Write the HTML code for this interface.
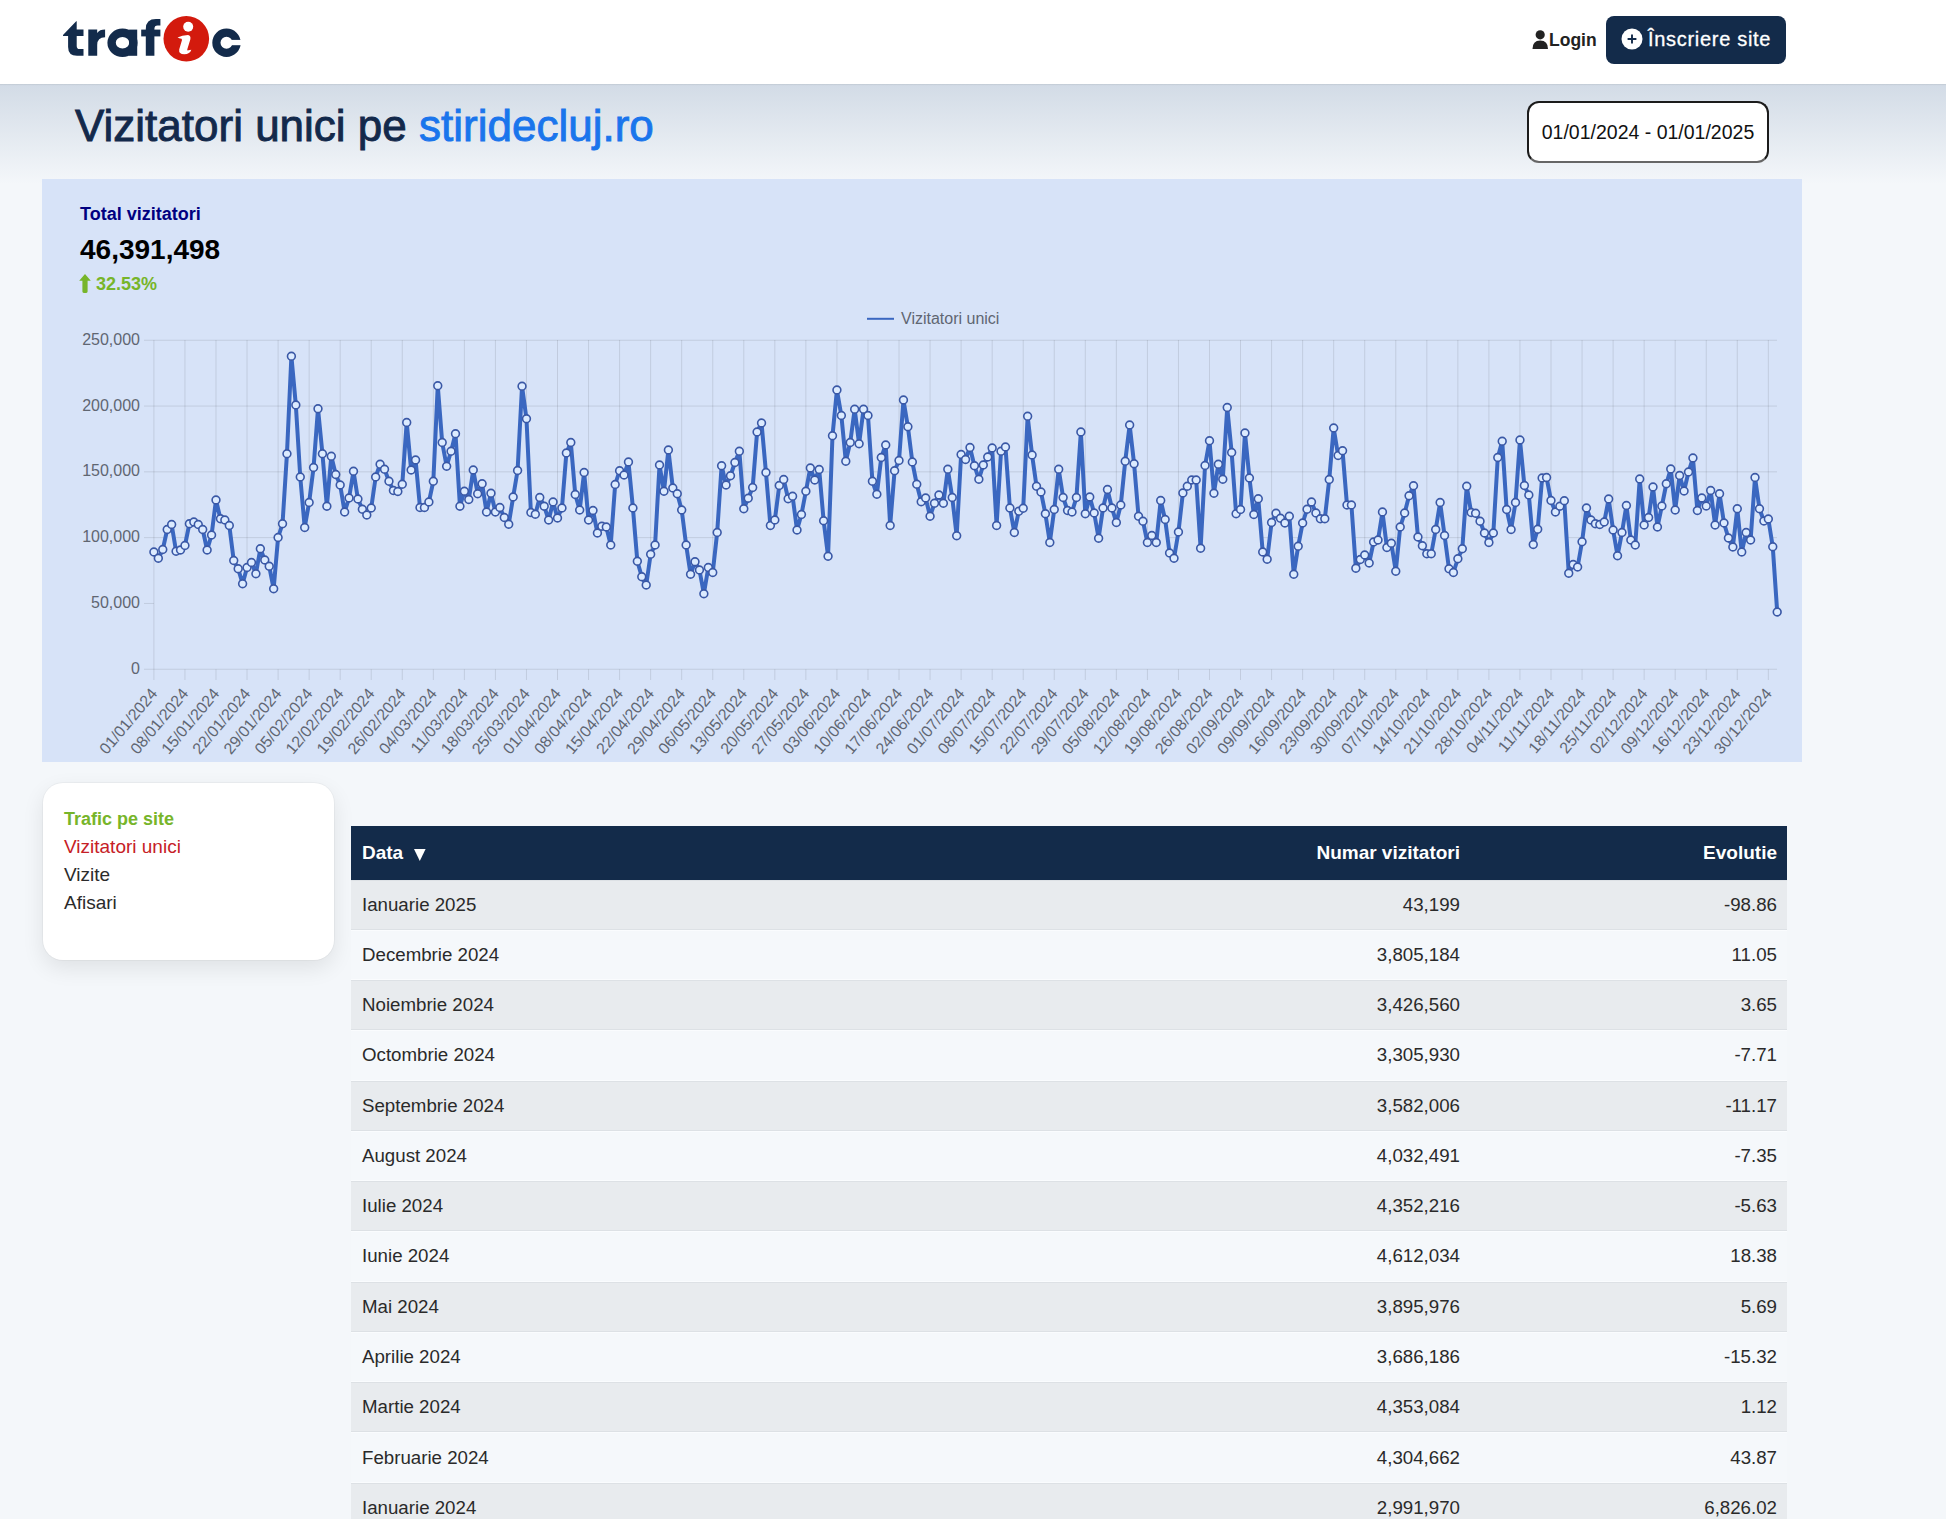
<!DOCTYPE html>
<html><head><meta charset="utf-8">
<style>
*{box-sizing:border-box;margin:0;padding:0}
html,body{width:1946px;height:1519px;overflow:hidden;background:#f4f7fa;font-family:"Liberation Sans",sans-serif;position:relative}
.abs{position:absolute}
#hdr{left:0;top:0;width:1946px;height:84px;background:#fff;box-shadow:0 1px 1px rgba(0,0,0,0.06)}
#hero{left:0;top:84px;width:1946px;height:140px;background:linear-gradient(#d2dbe6,#f4f7fa 100px)}
#title{left:75px;top:101px;font-size:44px;color:#13294b;white-space:nowrap;-webkit-text-stroke:0.9px #13294b}
#title span{color:#1a75ec;-webkit-text-stroke:0.9px #1a75ec}
#date{left:1527px;top:101px;width:242px;height:61.5px;padding-top:0.5px;border:2px solid #1b1b1b;border-bottom-color:#666;border-radius:12px;background:#fff;font-size:19.5px;color:#111;text-align:center;line-height:57px}
#panel{left:42px;top:179px;width:1760px;height:583px;background:#d7e3f8}
#tv{left:80px;top:204px;font-size:18px;font-weight:bold;color:#000080;white-space:nowrap}
#tot{left:80px;top:234px;font-size:28px;font-weight:bold;color:#000;white-space:nowrap}
#pct{left:96px;top:274px;font-size:18px;font-weight:bold;color:#77b52a;white-space:nowrap}
#chart{left:0;top:0;width:1946px;height:800px}
.g{stroke:rgba(0,0,0,0.1);stroke-width:1}
.yl{font-size:16px;fill:#606672;text-anchor:end}
.xl{font-size:16px;fill:#606672;text-anchor:end}
.ln{fill:none;stroke:#3a67c0;stroke-width:4;stroke-linejoin:round}
.pt{fill:#dcebff;stroke:#3a58a6;stroke-width:1.6}
#card{left:43px;top:783px;width:291px;height:177px;background:#fff;border-radius:20px;box-shadow:0 8px 22px rgba(0,0,0,0.09),0 0 0 1px rgba(0,0,0,0.03)}
.mi{left:64px;font-size:19px;white-space:nowrap;color:#2b2b2b}
#tbl{left:351px;top:826px;width:1436px}
.th{height:53.5px;background:#132b4a;color:#fff;font-weight:bold;font-size:19px;position:relative}
.tr{height:50.28px;position:relative;font-size:18.7px;color:#2a2a2a}
.r0{background:#e8ebee;box-shadow:inset 0 -1px #dde1e5,inset 0 1px #dde1e5}.r1{background:#f5f8fb;box-shadow:inset 0 -1px #fafcfe,inset 0 1px #fafcfe}
.c1{position:absolute;left:11px;top:50%;transform:translateY(-50%)}
.c2{position:absolute;right:327px;top:50%;transform:translateY(-50%)}
.c3{position:absolute;right:10px;top:50%;transform:translateY(-50%)}
</style></head><body>
<div id="hero" class="abs"></div>
<div id="hdr" class="abs"></div>
<svg class="abs" style="left:0;top:0" width="260" height="80" viewBox="0 0 260 80">
<g fill="#132b4b">
<path d="M63 36.1L63 35L76.2 21.3L76.7 21.3L76.7 29.6L83.5 29.6L83.5 36.1L76.7 36.1L76.7 46Q76.7 49.1 79.5 49.1L83.5 49.1L83.5 55.8L77 55.8Q68.1 55.8 68.1 47L68.1 36.1Z"/>
<path d="M88.3 29.6L97.2 29.6L97.2 33Q99.5 29.6 105.1 29.6L105.1 37.2Q97.2 37.2 97.2 45L97.2 55.8L88.3 55.8Z"/>
<rect x="129.1" y="29.6" width="8.1" height="26.2"/>
<path d="M145.8 55.8L145.8 29Q145.8 19.1 156 19.1L160.4 19.1L160.4 25.6L157.5 25.6Q154.4 25.6 154.4 29L154.4 55.8Z"/>
<rect x="141.2" y="29.6" width="19.2" height="6.8"/>
</g>
<ellipse cx="122.5" cy="42.8" rx="10.9" ry="10" fill="none" stroke="#132b4b" stroke-width="8.4"/>
<circle cx="226.5" cy="42.8" r="10.1" fill="none" stroke="#132b4b" stroke-width="8.2"/>
<rect x="231" y="39.9" width="12" height="5.3" fill="#fff"/>
<circle cx="186.3" cy="38.8" r="22.8" fill="#d31a0d"/>
<circle cx="188.2" cy="26.8" r="5" fill="#fff"/>
<path fill="#fff" d="M177.5 37.5Q182 35 188 35Q191.2 35.5 190.3 39.5L187.3 49.2Q187 50.8 188.5 50.3L191.3 49.8Q190 54.2 184.3 54.3Q178.5 54.2 179.2 49.5L182 40Q182 38.5 180 38.6Z"/>
</svg>
<svg class="abs" style="left:1532px;top:30px" width="17" height="19" viewBox="0 0 17 19"><circle cx="8.2" cy="4.8" r="4.6" fill="#222"/><path d="M0.5 19 Q0.5 10.5 8.2 10.5 Q16 10.5 16 19 Z" fill="#222"/></svg>
<div class="abs" style="left:1549px;top:30px;font-size:17.5px;font-weight:bold;color:#222">Login</div>
<div class="abs" style="left:1606px;top:16px;width:180px;height:48px;background:#132b4a;border-radius:8px"></div>
<svg class="abs" style="left:1621px;top:28px" width="22" height="22" viewBox="0 0 22 22"><circle cx="11" cy="11" r="10.5" fill="#fff"/><path d="M11 6.6V15.4M6.6 11H15.4" stroke="#132b4a" stroke-width="1.9"/></svg>
<div class="abs" style="left:1648px;top:28px;font-size:20px;letter-spacing:0.7px;color:#fff;white-space:nowrap;-webkit-text-stroke:0.3px #fff">Înscriere site</div>
<div id="title" class="abs">Vizitatori unici pe <span>stiridecluj.ro</span></div>
<div id="date" class="abs">01/01/2024 - 01/01/2025</div>
<div id="panel" class="abs"></div>
<div id="tv" class="abs">Total vizitatori</div>
<div id="tot" class="abs">46,391,498</div>
<svg class="abs" style="left:79px;top:274px" width="12" height="19" viewBox="0 0 12 19"><path d="M6 0L11.8 6.8H8.6V17.6Q8.6 19 7.2 19H4.8Q3.4 19 3.4 17.6V6.8H0.2Z" fill="#77b52a"/></svg>
<div id="pct" class="abs">32.53%</div>
<svg id="chart" class="abs" width="1946" height="800">
<line x1="867" y1="318.8" x2="894" y2="318.8" stroke="#3a67c0" stroke-width="2"/>
<text x="901" y="324" font-size="16" fill="#606672">Vizitatori unici</text>
<line x1="144" y1="603.45" x2="1777" y2="603.45" class="g"/>
<line x1="144" y1="537.65" x2="1777" y2="537.65" class="g"/>
<line x1="144" y1="471.85" x2="1777" y2="471.85" class="g"/>
<line x1="144" y1="406.05" x2="1777" y2="406.05" class="g"/>
<line x1="144" y1="340.25" x2="1777" y2="340.25" class="g"/>
<line x1="184.95" y1="340" x2="184.95" y2="669" class="g"/>
<line x1="215.99" y1="340" x2="215.99" y2="669" class="g"/>
<line x1="247.04" y1="340" x2="247.04" y2="669" class="g"/>
<line x1="278.09" y1="340" x2="278.09" y2="669" class="g"/>
<line x1="309.13" y1="340" x2="309.13" y2="669" class="g"/>
<line x1="340.18" y1="340" x2="340.18" y2="669" class="g"/>
<line x1="371.23" y1="340" x2="371.23" y2="669" class="g"/>
<line x1="402.27" y1="340" x2="402.27" y2="669" class="g"/>
<line x1="433.32" y1="340" x2="433.32" y2="669" class="g"/>
<line x1="464.37" y1="340" x2="464.37" y2="669" class="g"/>
<line x1="495.41" y1="340" x2="495.41" y2="669" class="g"/>
<line x1="526.46" y1="340" x2="526.46" y2="669" class="g"/>
<line x1="557.51" y1="340" x2="557.51" y2="669" class="g"/>
<line x1="588.55" y1="340" x2="588.55" y2="669" class="g"/>
<line x1="619.60" y1="340" x2="619.60" y2="669" class="g"/>
<line x1="650.65" y1="340" x2="650.65" y2="669" class="g"/>
<line x1="681.69" y1="340" x2="681.69" y2="669" class="g"/>
<line x1="712.74" y1="340" x2="712.74" y2="669" class="g"/>
<line x1="743.79" y1="340" x2="743.79" y2="669" class="g"/>
<line x1="774.83" y1="340" x2="774.83" y2="669" class="g"/>
<line x1="805.88" y1="340" x2="805.88" y2="669" class="g"/>
<line x1="836.93" y1="340" x2="836.93" y2="669" class="g"/>
<line x1="867.97" y1="340" x2="867.97" y2="669" class="g"/>
<line x1="899.02" y1="340" x2="899.02" y2="669" class="g"/>
<line x1="930.07" y1="340" x2="930.07" y2="669" class="g"/>
<line x1="961.11" y1="340" x2="961.11" y2="669" class="g"/>
<line x1="992.16" y1="340" x2="992.16" y2="669" class="g"/>
<line x1="1023.21" y1="340" x2="1023.21" y2="669" class="g"/>
<line x1="1054.25" y1="340" x2="1054.25" y2="669" class="g"/>
<line x1="1085.30" y1="340" x2="1085.30" y2="669" class="g"/>
<line x1="1116.35" y1="340" x2="1116.35" y2="669" class="g"/>
<line x1="1147.40" y1="340" x2="1147.40" y2="669" class="g"/>
<line x1="1178.44" y1="340" x2="1178.44" y2="669" class="g"/>
<line x1="1209.49" y1="340" x2="1209.49" y2="669" class="g"/>
<line x1="1240.54" y1="340" x2="1240.54" y2="669" class="g"/>
<line x1="1271.58" y1="340" x2="1271.58" y2="669" class="g"/>
<line x1="1302.63" y1="340" x2="1302.63" y2="669" class="g"/>
<line x1="1333.68" y1="340" x2="1333.68" y2="669" class="g"/>
<line x1="1364.72" y1="340" x2="1364.72" y2="669" class="g"/>
<line x1="1395.77" y1="340" x2="1395.77" y2="669" class="g"/>
<line x1="1426.82" y1="340" x2="1426.82" y2="669" class="g"/>
<line x1="1457.86" y1="340" x2="1457.86" y2="669" class="g"/>
<line x1="1488.91" y1="340" x2="1488.91" y2="669" class="g"/>
<line x1="1519.96" y1="340" x2="1519.96" y2="669" class="g"/>
<line x1="1551.00" y1="340" x2="1551.00" y2="669" class="g"/>
<line x1="1582.05" y1="340" x2="1582.05" y2="669" class="g"/>
<line x1="1613.10" y1="340" x2="1613.10" y2="669" class="g"/>
<line x1="1644.14" y1="340" x2="1644.14" y2="669" class="g"/>
<line x1="1675.19" y1="340" x2="1675.19" y2="669" class="g"/>
<line x1="1706.24" y1="340" x2="1706.24" y2="669" class="g"/>
<line x1="1737.28" y1="340" x2="1737.28" y2="669" class="g"/>
<line x1="1768.33" y1="340" x2="1768.33" y2="669" class="g"/>
<polygon points="153.90,669.25 153.90,552.00 158.34,558.25 162.77,549.50 167.21,529.50 171.64,524.50 176.08,551.25 180.51,550.00 184.95,545.50 189.38,523.75 193.82,522.00 198.25,524.50 202.69,529.50 207.12,550.00 211.56,535.00 215.99,500.00 220.43,518.75 224.86,520.00 229.30,525.50 233.73,560.50 238.17,568.75 242.60,583.75 247.04,567.50 251.48,562.50 255.91,573.75 260.35,548.75 264.78,560.00 269.22,566.25 273.65,588.75 278.09,537.50 282.52,523.75 286.96,453.75 291.39,356.25 295.83,405.00 300.26,477.00 304.70,527.50 309.13,502.50 313.57,467.50 318.00,408.75 322.44,453.75 326.87,506.25 331.31,456.25 335.75,474.50 340.18,485.00 344.62,512.00 349.05,498.00 353.49,471.25 357.92,499.00 362.36,509.25 366.79,515.00 371.23,508.00 375.66,477.00 380.10,464.25 384.53,469.25 388.97,481.25 393.40,490.50 397.84,491.50 402.27,484.25 406.71,422.50 411.14,470.00 415.58,460.00 420.01,507.50 424.45,507.50 428.89,502.00 433.32,481.25 437.76,385.75 442.19,442.50 446.63,466.25 451.06,451.25 455.50,433.75 459.93,506.25 464.37,491.25 468.80,499.50 473.24,470.00 477.67,493.75 482.11,483.75 486.54,512.00 490.98,493.25 495.41,512.00 499.85,507.50 504.28,517.50 508.72,524.25 513.15,497.00 517.59,470.50 522.03,386.25 526.46,418.75 530.90,512.50 535.33,514.25 539.77,497.50 544.20,506.25 548.64,520.00 553.07,502.00 557.51,518.00 561.94,508.00 566.38,453.00 570.81,442.50 575.25,494.50 579.68,510.00 584.12,472.50 588.55,520.00 592.99,510.50 597.42,533.00 601.86,526.25 606.30,527.00 610.73,545.00 615.17,484.50 619.60,470.75 624.04,475.00 628.47,462.00 632.91,508.00 637.34,561.25 641.78,576.75 646.21,585.00 650.65,554.25 655.08,545.00 659.52,465.00 663.95,491.25 668.39,450.00 672.82,488.00 677.26,493.75 681.69,510.00 686.13,545.00 690.56,574.25 695.00,561.75 699.44,570.00 703.87,593.75 708.31,567.50 712.74,572.50 717.18,532.50 721.61,465.75 726.05,485.00 730.48,475.75 734.92,462.50 739.35,451.25 743.79,508.75 748.22,498.25 752.66,487.50 757.09,432.00 761.53,423.00 765.96,472.50 770.40,525.50 774.83,520.00 779.27,485.50 783.70,479.50 788.14,498.75 792.58,496.25 797.01,530.00 801.45,514.50 805.88,491.25 810.32,468.00 814.75,480.00 819.19,469.50 823.62,520.75 828.06,556.25 832.49,435.75 836.93,390.00 841.36,415.50 845.80,461.25 850.23,442.50 854.67,409.25 859.10,443.75 863.54,409.25 867.97,415.50 872.41,481.25 876.85,494.25 881.28,457.50 885.72,445.00 890.15,525.50 894.59,470.75 899.02,460.50 903.46,400.00 907.89,426.75 912.33,462.00 916.76,484.25 921.20,501.75 925.63,498.00 930.07,516.25 934.50,503.25 938.94,495.00 943.37,503.25 947.81,469.25 952.24,497.50 956.68,535.75 961.11,454.50 965.55,459.50 969.99,447.50 974.42,465.75 978.86,479.25 983.29,465.00 987.73,457.00 992.16,448.00 996.60,525.50 1001.03,451.25 1005.47,447.00 1009.90,508.00 1014.34,532.50 1018.77,511.25 1023.21,508.25 1027.64,416.25 1032.08,455.00 1036.51,486.25 1040.95,492.00 1045.38,513.75 1049.82,542.50 1054.25,509.50 1058.69,469.25 1063.13,497.50 1067.56,510.50 1072.00,512.00 1076.43,497.50 1080.87,432.00 1085.30,513.75 1089.74,497.00 1094.17,513.00 1098.61,538.25 1103.04,508.00 1107.48,489.50 1111.91,508.00 1116.35,522.50 1120.78,505.00 1125.22,461.25 1129.65,425.00 1134.09,463.75 1138.52,516.25 1142.96,521.25 1147.40,542.50 1151.83,535.50 1156.27,542.50 1160.70,500.50 1165.14,519.50 1169.57,553.00 1174.01,558.25 1178.44,532.00 1182.88,493.00 1187.31,486.25 1191.75,480.00 1196.18,480.00 1200.62,548.25 1205.05,465.50 1209.49,440.75 1213.92,493.25 1218.36,464.25 1222.79,479.25 1227.23,407.50 1231.66,452.50 1236.10,513.75 1240.54,509.50 1244.97,433.00 1249.41,478.00 1253.84,514.50 1258.28,498.75 1262.71,552.00 1267.15,559.25 1271.58,522.50 1276.02,513.25 1280.45,518.25 1284.89,523.00 1289.32,516.25 1293.76,574.25 1298.19,546.25 1302.63,523.00 1307.06,509.25 1311.50,502.00 1315.93,513.00 1320.37,518.75 1324.80,518.75 1329.24,479.50 1333.68,428.00 1338.11,455.50 1342.55,450.75 1346.98,505.00 1351.42,505.00 1355.85,568.25 1360.29,559.50 1364.72,555.00 1369.16,563.00 1373.59,542.00 1378.03,540.00 1382.46,512.00 1386.90,547.50 1391.33,543.25 1395.77,571.25 1400.20,527.00 1404.64,513.00 1409.07,495.75 1413.51,485.75 1417.95,537.00 1422.38,545.75 1426.82,553.75 1431.25,553.75 1435.69,529.50 1440.12,502.50 1444.56,535.50 1448.99,568.75 1453.43,572.50 1457.86,558.75 1462.30,548.75 1466.73,486.25 1471.17,512.50 1475.60,513.25 1480.04,521.25 1484.47,533.00 1488.91,542.50 1493.34,533.00 1497.78,457.50 1502.21,441.25 1506.65,509.50 1511.09,529.50 1515.52,502.50 1519.96,440.00 1524.39,485.50 1528.83,495.00 1533.26,544.50 1537.70,529.25 1542.13,478.00 1546.57,477.50 1551.00,500.50 1555.44,512.00 1559.87,506.25 1564.31,500.75 1568.74,573.25 1573.18,564.50 1577.61,567.00 1582.05,541.75 1586.48,508.00 1590.92,520.00 1595.35,523.75 1599.79,524.50 1604.23,522.00 1608.66,499.00 1613.10,530.00 1617.53,555.75 1621.97,532.50 1626.40,505.50 1630.84,540.00 1635.27,545.00 1639.71,479.00 1644.14,525.00 1648.58,517.50 1653.01,487.00 1657.45,527.00 1661.88,506.00 1666.32,483.75 1670.75,469.00 1675.19,510.00 1679.62,475.50 1684.06,491.00 1688.50,472.00 1692.93,458.00 1697.37,510.50 1701.80,498.00 1706.24,506.00 1710.67,490.50 1715.11,525.00 1719.54,493.75 1723.98,523.00 1728.41,538.00 1732.85,547.00 1737.28,508.75 1741.72,552.00 1746.15,532.50 1750.59,540.00 1755.02,477.50 1759.46,508.75 1763.89,521.00 1768.33,519.00 1772.76,546.75 1777.20,612.00 1777.20,669.25" fill="#d7e3f8"/>
<line x1="144" y1="669.25" x2="1777" y2="669.25" class="g"/>
<line x1="153.90" y1="340" x2="153.90" y2="680" class="g"/>
<line x1="184.95" y1="669.25" x2="184.95" y2="680" class="g"/>
<line x1="215.99" y1="669.25" x2="215.99" y2="680" class="g"/>
<line x1="247.04" y1="669.25" x2="247.04" y2="680" class="g"/>
<line x1="278.09" y1="669.25" x2="278.09" y2="680" class="g"/>
<line x1="309.13" y1="669.25" x2="309.13" y2="680" class="g"/>
<line x1="340.18" y1="669.25" x2="340.18" y2="680" class="g"/>
<line x1="371.23" y1="669.25" x2="371.23" y2="680" class="g"/>
<line x1="402.27" y1="669.25" x2="402.27" y2="680" class="g"/>
<line x1="433.32" y1="669.25" x2="433.32" y2="680" class="g"/>
<line x1="464.37" y1="669.25" x2="464.37" y2="680" class="g"/>
<line x1="495.41" y1="669.25" x2="495.41" y2="680" class="g"/>
<line x1="526.46" y1="669.25" x2="526.46" y2="680" class="g"/>
<line x1="557.51" y1="669.25" x2="557.51" y2="680" class="g"/>
<line x1="588.55" y1="669.25" x2="588.55" y2="680" class="g"/>
<line x1="619.60" y1="669.25" x2="619.60" y2="680" class="g"/>
<line x1="650.65" y1="669.25" x2="650.65" y2="680" class="g"/>
<line x1="681.69" y1="669.25" x2="681.69" y2="680" class="g"/>
<line x1="712.74" y1="669.25" x2="712.74" y2="680" class="g"/>
<line x1="743.79" y1="669.25" x2="743.79" y2="680" class="g"/>
<line x1="774.83" y1="669.25" x2="774.83" y2="680" class="g"/>
<line x1="805.88" y1="669.25" x2="805.88" y2="680" class="g"/>
<line x1="836.93" y1="669.25" x2="836.93" y2="680" class="g"/>
<line x1="867.97" y1="669.25" x2="867.97" y2="680" class="g"/>
<line x1="899.02" y1="669.25" x2="899.02" y2="680" class="g"/>
<line x1="930.07" y1="669.25" x2="930.07" y2="680" class="g"/>
<line x1="961.11" y1="669.25" x2="961.11" y2="680" class="g"/>
<line x1="992.16" y1="669.25" x2="992.16" y2="680" class="g"/>
<line x1="1023.21" y1="669.25" x2="1023.21" y2="680" class="g"/>
<line x1="1054.25" y1="669.25" x2="1054.25" y2="680" class="g"/>
<line x1="1085.30" y1="669.25" x2="1085.30" y2="680" class="g"/>
<line x1="1116.35" y1="669.25" x2="1116.35" y2="680" class="g"/>
<line x1="1147.40" y1="669.25" x2="1147.40" y2="680" class="g"/>
<line x1="1178.44" y1="669.25" x2="1178.44" y2="680" class="g"/>
<line x1="1209.49" y1="669.25" x2="1209.49" y2="680" class="g"/>
<line x1="1240.54" y1="669.25" x2="1240.54" y2="680" class="g"/>
<line x1="1271.58" y1="669.25" x2="1271.58" y2="680" class="g"/>
<line x1="1302.63" y1="669.25" x2="1302.63" y2="680" class="g"/>
<line x1="1333.68" y1="669.25" x2="1333.68" y2="680" class="g"/>
<line x1="1364.72" y1="669.25" x2="1364.72" y2="680" class="g"/>
<line x1="1395.77" y1="669.25" x2="1395.77" y2="680" class="g"/>
<line x1="1426.82" y1="669.25" x2="1426.82" y2="680" class="g"/>
<line x1="1457.86" y1="669.25" x2="1457.86" y2="680" class="g"/>
<line x1="1488.91" y1="669.25" x2="1488.91" y2="680" class="g"/>
<line x1="1519.96" y1="669.25" x2="1519.96" y2="680" class="g"/>
<line x1="1551.00" y1="669.25" x2="1551.00" y2="680" class="g"/>
<line x1="1582.05" y1="669.25" x2="1582.05" y2="680" class="g"/>
<line x1="1613.10" y1="669.25" x2="1613.10" y2="680" class="g"/>
<line x1="1644.14" y1="669.25" x2="1644.14" y2="680" class="g"/>
<line x1="1675.19" y1="669.25" x2="1675.19" y2="680" class="g"/>
<line x1="1706.24" y1="669.25" x2="1706.24" y2="680" class="g"/>
<line x1="1737.28" y1="669.25" x2="1737.28" y2="680" class="g"/>
<line x1="1768.33" y1="669.25" x2="1768.33" y2="680" class="g"/>
<text x="140" y="673.75" class="yl">0</text>
<text x="140" y="607.95" class="yl">50,000</text>
<text x="140" y="542.15" class="yl">100,000</text>
<text x="140" y="476.35" class="yl">150,000</text>
<text x="140" y="410.55" class="yl">200,000</text>
<text x="140" y="344.75" class="yl">250,000</text>
<text transform="translate(158.20,694) rotate(-50)" class="xl">01/01/2024</text>
<text transform="translate(189.25,694) rotate(-50)" class="xl">08/01/2024</text>
<text transform="translate(220.29,694) rotate(-50)" class="xl">15/01/2024</text>
<text transform="translate(251.34,694) rotate(-50)" class="xl">22/01/2024</text>
<text transform="translate(282.39,694) rotate(-50)" class="xl">29/01/2024</text>
<text transform="translate(313.43,694) rotate(-50)" class="xl">05/02/2024</text>
<text transform="translate(344.48,694) rotate(-50)" class="xl">12/02/2024</text>
<text transform="translate(375.53,694) rotate(-50)" class="xl">19/02/2024</text>
<text transform="translate(406.57,694) rotate(-50)" class="xl">26/02/2024</text>
<text transform="translate(437.62,694) rotate(-50)" class="xl">04/03/2024</text>
<text transform="translate(468.67,694) rotate(-50)" class="xl">11/03/2024</text>
<text transform="translate(499.71,694) rotate(-50)" class="xl">18/03/2024</text>
<text transform="translate(530.76,694) rotate(-50)" class="xl">25/03/2024</text>
<text transform="translate(561.81,694) rotate(-50)" class="xl">01/04/2024</text>
<text transform="translate(592.85,694) rotate(-50)" class="xl">08/04/2024</text>
<text transform="translate(623.90,694) rotate(-50)" class="xl">15/04/2024</text>
<text transform="translate(654.95,694) rotate(-50)" class="xl">22/04/2024</text>
<text transform="translate(685.99,694) rotate(-50)" class="xl">29/04/2024</text>
<text transform="translate(717.04,694) rotate(-50)" class="xl">06/05/2024</text>
<text transform="translate(748.09,694) rotate(-50)" class="xl">13/05/2024</text>
<text transform="translate(779.13,694) rotate(-50)" class="xl">20/05/2024</text>
<text transform="translate(810.18,694) rotate(-50)" class="xl">27/05/2024</text>
<text transform="translate(841.23,694) rotate(-50)" class="xl">03/06/2024</text>
<text transform="translate(872.27,694) rotate(-50)" class="xl">10/06/2024</text>
<text transform="translate(903.32,694) rotate(-50)" class="xl">17/06/2024</text>
<text transform="translate(934.37,694) rotate(-50)" class="xl">24/06/2024</text>
<text transform="translate(965.41,694) rotate(-50)" class="xl">01/07/2024</text>
<text transform="translate(996.46,694) rotate(-50)" class="xl">08/07/2024</text>
<text transform="translate(1027.51,694) rotate(-50)" class="xl">15/07/2024</text>
<text transform="translate(1058.55,694) rotate(-50)" class="xl">22/07/2024</text>
<text transform="translate(1089.60,694) rotate(-50)" class="xl">29/07/2024</text>
<text transform="translate(1120.65,694) rotate(-50)" class="xl">05/08/2024</text>
<text transform="translate(1151.70,694) rotate(-50)" class="xl">12/08/2024</text>
<text transform="translate(1182.74,694) rotate(-50)" class="xl">19/08/2024</text>
<text transform="translate(1213.79,694) rotate(-50)" class="xl">26/08/2024</text>
<text transform="translate(1244.84,694) rotate(-50)" class="xl">02/09/2024</text>
<text transform="translate(1275.88,694) rotate(-50)" class="xl">09/09/2024</text>
<text transform="translate(1306.93,694) rotate(-50)" class="xl">16/09/2024</text>
<text transform="translate(1337.98,694) rotate(-50)" class="xl">23/09/2024</text>
<text transform="translate(1369.02,694) rotate(-50)" class="xl">30/09/2024</text>
<text transform="translate(1400.07,694) rotate(-50)" class="xl">07/10/2024</text>
<text transform="translate(1431.12,694) rotate(-50)" class="xl">14/10/2024</text>
<text transform="translate(1462.16,694) rotate(-50)" class="xl">21/10/2024</text>
<text transform="translate(1493.21,694) rotate(-50)" class="xl">28/10/2024</text>
<text transform="translate(1524.26,694) rotate(-50)" class="xl">04/11/2024</text>
<text transform="translate(1555.30,694) rotate(-50)" class="xl">11/11/2024</text>
<text transform="translate(1586.35,694) rotate(-50)" class="xl">18/11/2024</text>
<text transform="translate(1617.40,694) rotate(-50)" class="xl">25/11/2024</text>
<text transform="translate(1648.44,694) rotate(-50)" class="xl">02/12/2024</text>
<text transform="translate(1679.49,694) rotate(-50)" class="xl">09/12/2024</text>
<text transform="translate(1710.54,694) rotate(-50)" class="xl">16/12/2024</text>
<text transform="translate(1741.58,694) rotate(-50)" class="xl">23/12/2024</text>
<text transform="translate(1772.63,694) rotate(-50)" class="xl">30/12/2024</text>
<polyline points="153.90,552.00 158.34,558.25 162.77,549.50 167.21,529.50 171.64,524.50 176.08,551.25 180.51,550.00 184.95,545.50 189.38,523.75 193.82,522.00 198.25,524.50 202.69,529.50 207.12,550.00 211.56,535.00 215.99,500.00 220.43,518.75 224.86,520.00 229.30,525.50 233.73,560.50 238.17,568.75 242.60,583.75 247.04,567.50 251.48,562.50 255.91,573.75 260.35,548.75 264.78,560.00 269.22,566.25 273.65,588.75 278.09,537.50 282.52,523.75 286.96,453.75 291.39,356.25 295.83,405.00 300.26,477.00 304.70,527.50 309.13,502.50 313.57,467.50 318.00,408.75 322.44,453.75 326.87,506.25 331.31,456.25 335.75,474.50 340.18,485.00 344.62,512.00 349.05,498.00 353.49,471.25 357.92,499.00 362.36,509.25 366.79,515.00 371.23,508.00 375.66,477.00 380.10,464.25 384.53,469.25 388.97,481.25 393.40,490.50 397.84,491.50 402.27,484.25 406.71,422.50 411.14,470.00 415.58,460.00 420.01,507.50 424.45,507.50 428.89,502.00 433.32,481.25 437.76,385.75 442.19,442.50 446.63,466.25 451.06,451.25 455.50,433.75 459.93,506.25 464.37,491.25 468.80,499.50 473.24,470.00 477.67,493.75 482.11,483.75 486.54,512.00 490.98,493.25 495.41,512.00 499.85,507.50 504.28,517.50 508.72,524.25 513.15,497.00 517.59,470.50 522.03,386.25 526.46,418.75 530.90,512.50 535.33,514.25 539.77,497.50 544.20,506.25 548.64,520.00 553.07,502.00 557.51,518.00 561.94,508.00 566.38,453.00 570.81,442.50 575.25,494.50 579.68,510.00 584.12,472.50 588.55,520.00 592.99,510.50 597.42,533.00 601.86,526.25 606.30,527.00 610.73,545.00 615.17,484.50 619.60,470.75 624.04,475.00 628.47,462.00 632.91,508.00 637.34,561.25 641.78,576.75 646.21,585.00 650.65,554.25 655.08,545.00 659.52,465.00 663.95,491.25 668.39,450.00 672.82,488.00 677.26,493.75 681.69,510.00 686.13,545.00 690.56,574.25 695.00,561.75 699.44,570.00 703.87,593.75 708.31,567.50 712.74,572.50 717.18,532.50 721.61,465.75 726.05,485.00 730.48,475.75 734.92,462.50 739.35,451.25 743.79,508.75 748.22,498.25 752.66,487.50 757.09,432.00 761.53,423.00 765.96,472.50 770.40,525.50 774.83,520.00 779.27,485.50 783.70,479.50 788.14,498.75 792.58,496.25 797.01,530.00 801.45,514.50 805.88,491.25 810.32,468.00 814.75,480.00 819.19,469.50 823.62,520.75 828.06,556.25 832.49,435.75 836.93,390.00 841.36,415.50 845.80,461.25 850.23,442.50 854.67,409.25 859.10,443.75 863.54,409.25 867.97,415.50 872.41,481.25 876.85,494.25 881.28,457.50 885.72,445.00 890.15,525.50 894.59,470.75 899.02,460.50 903.46,400.00 907.89,426.75 912.33,462.00 916.76,484.25 921.20,501.75 925.63,498.00 930.07,516.25 934.50,503.25 938.94,495.00 943.37,503.25 947.81,469.25 952.24,497.50 956.68,535.75 961.11,454.50 965.55,459.50 969.99,447.50 974.42,465.75 978.86,479.25 983.29,465.00 987.73,457.00 992.16,448.00 996.60,525.50 1001.03,451.25 1005.47,447.00 1009.90,508.00 1014.34,532.50 1018.77,511.25 1023.21,508.25 1027.64,416.25 1032.08,455.00 1036.51,486.25 1040.95,492.00 1045.38,513.75 1049.82,542.50 1054.25,509.50 1058.69,469.25 1063.13,497.50 1067.56,510.50 1072.00,512.00 1076.43,497.50 1080.87,432.00 1085.30,513.75 1089.74,497.00 1094.17,513.00 1098.61,538.25 1103.04,508.00 1107.48,489.50 1111.91,508.00 1116.35,522.50 1120.78,505.00 1125.22,461.25 1129.65,425.00 1134.09,463.75 1138.52,516.25 1142.96,521.25 1147.40,542.50 1151.83,535.50 1156.27,542.50 1160.70,500.50 1165.14,519.50 1169.57,553.00 1174.01,558.25 1178.44,532.00 1182.88,493.00 1187.31,486.25 1191.75,480.00 1196.18,480.00 1200.62,548.25 1205.05,465.50 1209.49,440.75 1213.92,493.25 1218.36,464.25 1222.79,479.25 1227.23,407.50 1231.66,452.50 1236.10,513.75 1240.54,509.50 1244.97,433.00 1249.41,478.00 1253.84,514.50 1258.28,498.75 1262.71,552.00 1267.15,559.25 1271.58,522.50 1276.02,513.25 1280.45,518.25 1284.89,523.00 1289.32,516.25 1293.76,574.25 1298.19,546.25 1302.63,523.00 1307.06,509.25 1311.50,502.00 1315.93,513.00 1320.37,518.75 1324.80,518.75 1329.24,479.50 1333.68,428.00 1338.11,455.50 1342.55,450.75 1346.98,505.00 1351.42,505.00 1355.85,568.25 1360.29,559.50 1364.72,555.00 1369.16,563.00 1373.59,542.00 1378.03,540.00 1382.46,512.00 1386.90,547.50 1391.33,543.25 1395.77,571.25 1400.20,527.00 1404.64,513.00 1409.07,495.75 1413.51,485.75 1417.95,537.00 1422.38,545.75 1426.82,553.75 1431.25,553.75 1435.69,529.50 1440.12,502.50 1444.56,535.50 1448.99,568.75 1453.43,572.50 1457.86,558.75 1462.30,548.75 1466.73,486.25 1471.17,512.50 1475.60,513.25 1480.04,521.25 1484.47,533.00 1488.91,542.50 1493.34,533.00 1497.78,457.50 1502.21,441.25 1506.65,509.50 1511.09,529.50 1515.52,502.50 1519.96,440.00 1524.39,485.50 1528.83,495.00 1533.26,544.50 1537.70,529.25 1542.13,478.00 1546.57,477.50 1551.00,500.50 1555.44,512.00 1559.87,506.25 1564.31,500.75 1568.74,573.25 1573.18,564.50 1577.61,567.00 1582.05,541.75 1586.48,508.00 1590.92,520.00 1595.35,523.75 1599.79,524.50 1604.23,522.00 1608.66,499.00 1613.10,530.00 1617.53,555.75 1621.97,532.50 1626.40,505.50 1630.84,540.00 1635.27,545.00 1639.71,479.00 1644.14,525.00 1648.58,517.50 1653.01,487.00 1657.45,527.00 1661.88,506.00 1666.32,483.75 1670.75,469.00 1675.19,510.00 1679.62,475.50 1684.06,491.00 1688.50,472.00 1692.93,458.00 1697.37,510.50 1701.80,498.00 1706.24,506.00 1710.67,490.50 1715.11,525.00 1719.54,493.75 1723.98,523.00 1728.41,538.00 1732.85,547.00 1737.28,508.75 1741.72,552.00 1746.15,532.50 1750.59,540.00 1755.02,477.50 1759.46,508.75 1763.89,521.00 1768.33,519.00 1772.76,546.75 1777.20,612.00" class="ln"/>
<circle cx="153.90" cy="552.00" r="3.9" class="pt"/>
<circle cx="158.34" cy="558.25" r="3.9" class="pt"/>
<circle cx="162.77" cy="549.50" r="3.9" class="pt"/>
<circle cx="167.21" cy="529.50" r="3.9" class="pt"/>
<circle cx="171.64" cy="524.50" r="3.9" class="pt"/>
<circle cx="176.08" cy="551.25" r="3.9" class="pt"/>
<circle cx="180.51" cy="550.00" r="3.9" class="pt"/>
<circle cx="184.95" cy="545.50" r="3.9" class="pt"/>
<circle cx="189.38" cy="523.75" r="3.9" class="pt"/>
<circle cx="193.82" cy="522.00" r="3.9" class="pt"/>
<circle cx="198.25" cy="524.50" r="3.9" class="pt"/>
<circle cx="202.69" cy="529.50" r="3.9" class="pt"/>
<circle cx="207.12" cy="550.00" r="3.9" class="pt"/>
<circle cx="211.56" cy="535.00" r="3.9" class="pt"/>
<circle cx="215.99" cy="500.00" r="3.9" class="pt"/>
<circle cx="220.43" cy="518.75" r="3.9" class="pt"/>
<circle cx="224.86" cy="520.00" r="3.9" class="pt"/>
<circle cx="229.30" cy="525.50" r="3.9" class="pt"/>
<circle cx="233.73" cy="560.50" r="3.9" class="pt"/>
<circle cx="238.17" cy="568.75" r="3.9" class="pt"/>
<circle cx="242.60" cy="583.75" r="3.9" class="pt"/>
<circle cx="247.04" cy="567.50" r="3.9" class="pt"/>
<circle cx="251.48" cy="562.50" r="3.9" class="pt"/>
<circle cx="255.91" cy="573.75" r="3.9" class="pt"/>
<circle cx="260.35" cy="548.75" r="3.9" class="pt"/>
<circle cx="264.78" cy="560.00" r="3.9" class="pt"/>
<circle cx="269.22" cy="566.25" r="3.9" class="pt"/>
<circle cx="273.65" cy="588.75" r="3.9" class="pt"/>
<circle cx="278.09" cy="537.50" r="3.9" class="pt"/>
<circle cx="282.52" cy="523.75" r="3.9" class="pt"/>
<circle cx="286.96" cy="453.75" r="3.9" class="pt"/>
<circle cx="291.39" cy="356.25" r="3.9" class="pt"/>
<circle cx="295.83" cy="405.00" r="3.9" class="pt"/>
<circle cx="300.26" cy="477.00" r="3.9" class="pt"/>
<circle cx="304.70" cy="527.50" r="3.9" class="pt"/>
<circle cx="309.13" cy="502.50" r="3.9" class="pt"/>
<circle cx="313.57" cy="467.50" r="3.9" class="pt"/>
<circle cx="318.00" cy="408.75" r="3.9" class="pt"/>
<circle cx="322.44" cy="453.75" r="3.9" class="pt"/>
<circle cx="326.87" cy="506.25" r="3.9" class="pt"/>
<circle cx="331.31" cy="456.25" r="3.9" class="pt"/>
<circle cx="335.75" cy="474.50" r="3.9" class="pt"/>
<circle cx="340.18" cy="485.00" r="3.9" class="pt"/>
<circle cx="344.62" cy="512.00" r="3.9" class="pt"/>
<circle cx="349.05" cy="498.00" r="3.9" class="pt"/>
<circle cx="353.49" cy="471.25" r="3.9" class="pt"/>
<circle cx="357.92" cy="499.00" r="3.9" class="pt"/>
<circle cx="362.36" cy="509.25" r="3.9" class="pt"/>
<circle cx="366.79" cy="515.00" r="3.9" class="pt"/>
<circle cx="371.23" cy="508.00" r="3.9" class="pt"/>
<circle cx="375.66" cy="477.00" r="3.9" class="pt"/>
<circle cx="380.10" cy="464.25" r="3.9" class="pt"/>
<circle cx="384.53" cy="469.25" r="3.9" class="pt"/>
<circle cx="388.97" cy="481.25" r="3.9" class="pt"/>
<circle cx="393.40" cy="490.50" r="3.9" class="pt"/>
<circle cx="397.84" cy="491.50" r="3.9" class="pt"/>
<circle cx="402.27" cy="484.25" r="3.9" class="pt"/>
<circle cx="406.71" cy="422.50" r="3.9" class="pt"/>
<circle cx="411.14" cy="470.00" r="3.9" class="pt"/>
<circle cx="415.58" cy="460.00" r="3.9" class="pt"/>
<circle cx="420.01" cy="507.50" r="3.9" class="pt"/>
<circle cx="424.45" cy="507.50" r="3.9" class="pt"/>
<circle cx="428.89" cy="502.00" r="3.9" class="pt"/>
<circle cx="433.32" cy="481.25" r="3.9" class="pt"/>
<circle cx="437.76" cy="385.75" r="3.9" class="pt"/>
<circle cx="442.19" cy="442.50" r="3.9" class="pt"/>
<circle cx="446.63" cy="466.25" r="3.9" class="pt"/>
<circle cx="451.06" cy="451.25" r="3.9" class="pt"/>
<circle cx="455.50" cy="433.75" r="3.9" class="pt"/>
<circle cx="459.93" cy="506.25" r="3.9" class="pt"/>
<circle cx="464.37" cy="491.25" r="3.9" class="pt"/>
<circle cx="468.80" cy="499.50" r="3.9" class="pt"/>
<circle cx="473.24" cy="470.00" r="3.9" class="pt"/>
<circle cx="477.67" cy="493.75" r="3.9" class="pt"/>
<circle cx="482.11" cy="483.75" r="3.9" class="pt"/>
<circle cx="486.54" cy="512.00" r="3.9" class="pt"/>
<circle cx="490.98" cy="493.25" r="3.9" class="pt"/>
<circle cx="495.41" cy="512.00" r="3.9" class="pt"/>
<circle cx="499.85" cy="507.50" r="3.9" class="pt"/>
<circle cx="504.28" cy="517.50" r="3.9" class="pt"/>
<circle cx="508.72" cy="524.25" r="3.9" class="pt"/>
<circle cx="513.15" cy="497.00" r="3.9" class="pt"/>
<circle cx="517.59" cy="470.50" r="3.9" class="pt"/>
<circle cx="522.03" cy="386.25" r="3.9" class="pt"/>
<circle cx="526.46" cy="418.75" r="3.9" class="pt"/>
<circle cx="530.90" cy="512.50" r="3.9" class="pt"/>
<circle cx="535.33" cy="514.25" r="3.9" class="pt"/>
<circle cx="539.77" cy="497.50" r="3.9" class="pt"/>
<circle cx="544.20" cy="506.25" r="3.9" class="pt"/>
<circle cx="548.64" cy="520.00" r="3.9" class="pt"/>
<circle cx="553.07" cy="502.00" r="3.9" class="pt"/>
<circle cx="557.51" cy="518.00" r="3.9" class="pt"/>
<circle cx="561.94" cy="508.00" r="3.9" class="pt"/>
<circle cx="566.38" cy="453.00" r="3.9" class="pt"/>
<circle cx="570.81" cy="442.50" r="3.9" class="pt"/>
<circle cx="575.25" cy="494.50" r="3.9" class="pt"/>
<circle cx="579.68" cy="510.00" r="3.9" class="pt"/>
<circle cx="584.12" cy="472.50" r="3.9" class="pt"/>
<circle cx="588.55" cy="520.00" r="3.9" class="pt"/>
<circle cx="592.99" cy="510.50" r="3.9" class="pt"/>
<circle cx="597.42" cy="533.00" r="3.9" class="pt"/>
<circle cx="601.86" cy="526.25" r="3.9" class="pt"/>
<circle cx="606.30" cy="527.00" r="3.9" class="pt"/>
<circle cx="610.73" cy="545.00" r="3.9" class="pt"/>
<circle cx="615.17" cy="484.50" r="3.9" class="pt"/>
<circle cx="619.60" cy="470.75" r="3.9" class="pt"/>
<circle cx="624.04" cy="475.00" r="3.9" class="pt"/>
<circle cx="628.47" cy="462.00" r="3.9" class="pt"/>
<circle cx="632.91" cy="508.00" r="3.9" class="pt"/>
<circle cx="637.34" cy="561.25" r="3.9" class="pt"/>
<circle cx="641.78" cy="576.75" r="3.9" class="pt"/>
<circle cx="646.21" cy="585.00" r="3.9" class="pt"/>
<circle cx="650.65" cy="554.25" r="3.9" class="pt"/>
<circle cx="655.08" cy="545.00" r="3.9" class="pt"/>
<circle cx="659.52" cy="465.00" r="3.9" class="pt"/>
<circle cx="663.95" cy="491.25" r="3.9" class="pt"/>
<circle cx="668.39" cy="450.00" r="3.9" class="pt"/>
<circle cx="672.82" cy="488.00" r="3.9" class="pt"/>
<circle cx="677.26" cy="493.75" r="3.9" class="pt"/>
<circle cx="681.69" cy="510.00" r="3.9" class="pt"/>
<circle cx="686.13" cy="545.00" r="3.9" class="pt"/>
<circle cx="690.56" cy="574.25" r="3.9" class="pt"/>
<circle cx="695.00" cy="561.75" r="3.9" class="pt"/>
<circle cx="699.44" cy="570.00" r="3.9" class="pt"/>
<circle cx="703.87" cy="593.75" r="3.9" class="pt"/>
<circle cx="708.31" cy="567.50" r="3.9" class="pt"/>
<circle cx="712.74" cy="572.50" r="3.9" class="pt"/>
<circle cx="717.18" cy="532.50" r="3.9" class="pt"/>
<circle cx="721.61" cy="465.75" r="3.9" class="pt"/>
<circle cx="726.05" cy="485.00" r="3.9" class="pt"/>
<circle cx="730.48" cy="475.75" r="3.9" class="pt"/>
<circle cx="734.92" cy="462.50" r="3.9" class="pt"/>
<circle cx="739.35" cy="451.25" r="3.9" class="pt"/>
<circle cx="743.79" cy="508.75" r="3.9" class="pt"/>
<circle cx="748.22" cy="498.25" r="3.9" class="pt"/>
<circle cx="752.66" cy="487.50" r="3.9" class="pt"/>
<circle cx="757.09" cy="432.00" r="3.9" class="pt"/>
<circle cx="761.53" cy="423.00" r="3.9" class="pt"/>
<circle cx="765.96" cy="472.50" r="3.9" class="pt"/>
<circle cx="770.40" cy="525.50" r="3.9" class="pt"/>
<circle cx="774.83" cy="520.00" r="3.9" class="pt"/>
<circle cx="779.27" cy="485.50" r="3.9" class="pt"/>
<circle cx="783.70" cy="479.50" r="3.9" class="pt"/>
<circle cx="788.14" cy="498.75" r="3.9" class="pt"/>
<circle cx="792.58" cy="496.25" r="3.9" class="pt"/>
<circle cx="797.01" cy="530.00" r="3.9" class="pt"/>
<circle cx="801.45" cy="514.50" r="3.9" class="pt"/>
<circle cx="805.88" cy="491.25" r="3.9" class="pt"/>
<circle cx="810.32" cy="468.00" r="3.9" class="pt"/>
<circle cx="814.75" cy="480.00" r="3.9" class="pt"/>
<circle cx="819.19" cy="469.50" r="3.9" class="pt"/>
<circle cx="823.62" cy="520.75" r="3.9" class="pt"/>
<circle cx="828.06" cy="556.25" r="3.9" class="pt"/>
<circle cx="832.49" cy="435.75" r="3.9" class="pt"/>
<circle cx="836.93" cy="390.00" r="3.9" class="pt"/>
<circle cx="841.36" cy="415.50" r="3.9" class="pt"/>
<circle cx="845.80" cy="461.25" r="3.9" class="pt"/>
<circle cx="850.23" cy="442.50" r="3.9" class="pt"/>
<circle cx="854.67" cy="409.25" r="3.9" class="pt"/>
<circle cx="859.10" cy="443.75" r="3.9" class="pt"/>
<circle cx="863.54" cy="409.25" r="3.9" class="pt"/>
<circle cx="867.97" cy="415.50" r="3.9" class="pt"/>
<circle cx="872.41" cy="481.25" r="3.9" class="pt"/>
<circle cx="876.85" cy="494.25" r="3.9" class="pt"/>
<circle cx="881.28" cy="457.50" r="3.9" class="pt"/>
<circle cx="885.72" cy="445.00" r="3.9" class="pt"/>
<circle cx="890.15" cy="525.50" r="3.9" class="pt"/>
<circle cx="894.59" cy="470.75" r="3.9" class="pt"/>
<circle cx="899.02" cy="460.50" r="3.9" class="pt"/>
<circle cx="903.46" cy="400.00" r="3.9" class="pt"/>
<circle cx="907.89" cy="426.75" r="3.9" class="pt"/>
<circle cx="912.33" cy="462.00" r="3.9" class="pt"/>
<circle cx="916.76" cy="484.25" r="3.9" class="pt"/>
<circle cx="921.20" cy="501.75" r="3.9" class="pt"/>
<circle cx="925.63" cy="498.00" r="3.9" class="pt"/>
<circle cx="930.07" cy="516.25" r="3.9" class="pt"/>
<circle cx="934.50" cy="503.25" r="3.9" class="pt"/>
<circle cx="938.94" cy="495.00" r="3.9" class="pt"/>
<circle cx="943.37" cy="503.25" r="3.9" class="pt"/>
<circle cx="947.81" cy="469.25" r="3.9" class="pt"/>
<circle cx="952.24" cy="497.50" r="3.9" class="pt"/>
<circle cx="956.68" cy="535.75" r="3.9" class="pt"/>
<circle cx="961.11" cy="454.50" r="3.9" class="pt"/>
<circle cx="965.55" cy="459.50" r="3.9" class="pt"/>
<circle cx="969.99" cy="447.50" r="3.9" class="pt"/>
<circle cx="974.42" cy="465.75" r="3.9" class="pt"/>
<circle cx="978.86" cy="479.25" r="3.9" class="pt"/>
<circle cx="983.29" cy="465.00" r="3.9" class="pt"/>
<circle cx="987.73" cy="457.00" r="3.9" class="pt"/>
<circle cx="992.16" cy="448.00" r="3.9" class="pt"/>
<circle cx="996.60" cy="525.50" r="3.9" class="pt"/>
<circle cx="1001.03" cy="451.25" r="3.9" class="pt"/>
<circle cx="1005.47" cy="447.00" r="3.9" class="pt"/>
<circle cx="1009.90" cy="508.00" r="3.9" class="pt"/>
<circle cx="1014.34" cy="532.50" r="3.9" class="pt"/>
<circle cx="1018.77" cy="511.25" r="3.9" class="pt"/>
<circle cx="1023.21" cy="508.25" r="3.9" class="pt"/>
<circle cx="1027.64" cy="416.25" r="3.9" class="pt"/>
<circle cx="1032.08" cy="455.00" r="3.9" class="pt"/>
<circle cx="1036.51" cy="486.25" r="3.9" class="pt"/>
<circle cx="1040.95" cy="492.00" r="3.9" class="pt"/>
<circle cx="1045.38" cy="513.75" r="3.9" class="pt"/>
<circle cx="1049.82" cy="542.50" r="3.9" class="pt"/>
<circle cx="1054.25" cy="509.50" r="3.9" class="pt"/>
<circle cx="1058.69" cy="469.25" r="3.9" class="pt"/>
<circle cx="1063.13" cy="497.50" r="3.9" class="pt"/>
<circle cx="1067.56" cy="510.50" r="3.9" class="pt"/>
<circle cx="1072.00" cy="512.00" r="3.9" class="pt"/>
<circle cx="1076.43" cy="497.50" r="3.9" class="pt"/>
<circle cx="1080.87" cy="432.00" r="3.9" class="pt"/>
<circle cx="1085.30" cy="513.75" r="3.9" class="pt"/>
<circle cx="1089.74" cy="497.00" r="3.9" class="pt"/>
<circle cx="1094.17" cy="513.00" r="3.9" class="pt"/>
<circle cx="1098.61" cy="538.25" r="3.9" class="pt"/>
<circle cx="1103.04" cy="508.00" r="3.9" class="pt"/>
<circle cx="1107.48" cy="489.50" r="3.9" class="pt"/>
<circle cx="1111.91" cy="508.00" r="3.9" class="pt"/>
<circle cx="1116.35" cy="522.50" r="3.9" class="pt"/>
<circle cx="1120.78" cy="505.00" r="3.9" class="pt"/>
<circle cx="1125.22" cy="461.25" r="3.9" class="pt"/>
<circle cx="1129.65" cy="425.00" r="3.9" class="pt"/>
<circle cx="1134.09" cy="463.75" r="3.9" class="pt"/>
<circle cx="1138.52" cy="516.25" r="3.9" class="pt"/>
<circle cx="1142.96" cy="521.25" r="3.9" class="pt"/>
<circle cx="1147.40" cy="542.50" r="3.9" class="pt"/>
<circle cx="1151.83" cy="535.50" r="3.9" class="pt"/>
<circle cx="1156.27" cy="542.50" r="3.9" class="pt"/>
<circle cx="1160.70" cy="500.50" r="3.9" class="pt"/>
<circle cx="1165.14" cy="519.50" r="3.9" class="pt"/>
<circle cx="1169.57" cy="553.00" r="3.9" class="pt"/>
<circle cx="1174.01" cy="558.25" r="3.9" class="pt"/>
<circle cx="1178.44" cy="532.00" r="3.9" class="pt"/>
<circle cx="1182.88" cy="493.00" r="3.9" class="pt"/>
<circle cx="1187.31" cy="486.25" r="3.9" class="pt"/>
<circle cx="1191.75" cy="480.00" r="3.9" class="pt"/>
<circle cx="1196.18" cy="480.00" r="3.9" class="pt"/>
<circle cx="1200.62" cy="548.25" r="3.9" class="pt"/>
<circle cx="1205.05" cy="465.50" r="3.9" class="pt"/>
<circle cx="1209.49" cy="440.75" r="3.9" class="pt"/>
<circle cx="1213.92" cy="493.25" r="3.9" class="pt"/>
<circle cx="1218.36" cy="464.25" r="3.9" class="pt"/>
<circle cx="1222.79" cy="479.25" r="3.9" class="pt"/>
<circle cx="1227.23" cy="407.50" r="3.9" class="pt"/>
<circle cx="1231.66" cy="452.50" r="3.9" class="pt"/>
<circle cx="1236.10" cy="513.75" r="3.9" class="pt"/>
<circle cx="1240.54" cy="509.50" r="3.9" class="pt"/>
<circle cx="1244.97" cy="433.00" r="3.9" class="pt"/>
<circle cx="1249.41" cy="478.00" r="3.9" class="pt"/>
<circle cx="1253.84" cy="514.50" r="3.9" class="pt"/>
<circle cx="1258.28" cy="498.75" r="3.9" class="pt"/>
<circle cx="1262.71" cy="552.00" r="3.9" class="pt"/>
<circle cx="1267.15" cy="559.25" r="3.9" class="pt"/>
<circle cx="1271.58" cy="522.50" r="3.9" class="pt"/>
<circle cx="1276.02" cy="513.25" r="3.9" class="pt"/>
<circle cx="1280.45" cy="518.25" r="3.9" class="pt"/>
<circle cx="1284.89" cy="523.00" r="3.9" class="pt"/>
<circle cx="1289.32" cy="516.25" r="3.9" class="pt"/>
<circle cx="1293.76" cy="574.25" r="3.9" class="pt"/>
<circle cx="1298.19" cy="546.25" r="3.9" class="pt"/>
<circle cx="1302.63" cy="523.00" r="3.9" class="pt"/>
<circle cx="1307.06" cy="509.25" r="3.9" class="pt"/>
<circle cx="1311.50" cy="502.00" r="3.9" class="pt"/>
<circle cx="1315.93" cy="513.00" r="3.9" class="pt"/>
<circle cx="1320.37" cy="518.75" r="3.9" class="pt"/>
<circle cx="1324.80" cy="518.75" r="3.9" class="pt"/>
<circle cx="1329.24" cy="479.50" r="3.9" class="pt"/>
<circle cx="1333.68" cy="428.00" r="3.9" class="pt"/>
<circle cx="1338.11" cy="455.50" r="3.9" class="pt"/>
<circle cx="1342.55" cy="450.75" r="3.9" class="pt"/>
<circle cx="1346.98" cy="505.00" r="3.9" class="pt"/>
<circle cx="1351.42" cy="505.00" r="3.9" class="pt"/>
<circle cx="1355.85" cy="568.25" r="3.9" class="pt"/>
<circle cx="1360.29" cy="559.50" r="3.9" class="pt"/>
<circle cx="1364.72" cy="555.00" r="3.9" class="pt"/>
<circle cx="1369.16" cy="563.00" r="3.9" class="pt"/>
<circle cx="1373.59" cy="542.00" r="3.9" class="pt"/>
<circle cx="1378.03" cy="540.00" r="3.9" class="pt"/>
<circle cx="1382.46" cy="512.00" r="3.9" class="pt"/>
<circle cx="1386.90" cy="547.50" r="3.9" class="pt"/>
<circle cx="1391.33" cy="543.25" r="3.9" class="pt"/>
<circle cx="1395.77" cy="571.25" r="3.9" class="pt"/>
<circle cx="1400.20" cy="527.00" r="3.9" class="pt"/>
<circle cx="1404.64" cy="513.00" r="3.9" class="pt"/>
<circle cx="1409.07" cy="495.75" r="3.9" class="pt"/>
<circle cx="1413.51" cy="485.75" r="3.9" class="pt"/>
<circle cx="1417.95" cy="537.00" r="3.9" class="pt"/>
<circle cx="1422.38" cy="545.75" r="3.9" class="pt"/>
<circle cx="1426.82" cy="553.75" r="3.9" class="pt"/>
<circle cx="1431.25" cy="553.75" r="3.9" class="pt"/>
<circle cx="1435.69" cy="529.50" r="3.9" class="pt"/>
<circle cx="1440.12" cy="502.50" r="3.9" class="pt"/>
<circle cx="1444.56" cy="535.50" r="3.9" class="pt"/>
<circle cx="1448.99" cy="568.75" r="3.9" class="pt"/>
<circle cx="1453.43" cy="572.50" r="3.9" class="pt"/>
<circle cx="1457.86" cy="558.75" r="3.9" class="pt"/>
<circle cx="1462.30" cy="548.75" r="3.9" class="pt"/>
<circle cx="1466.73" cy="486.25" r="3.9" class="pt"/>
<circle cx="1471.17" cy="512.50" r="3.9" class="pt"/>
<circle cx="1475.60" cy="513.25" r="3.9" class="pt"/>
<circle cx="1480.04" cy="521.25" r="3.9" class="pt"/>
<circle cx="1484.47" cy="533.00" r="3.9" class="pt"/>
<circle cx="1488.91" cy="542.50" r="3.9" class="pt"/>
<circle cx="1493.34" cy="533.00" r="3.9" class="pt"/>
<circle cx="1497.78" cy="457.50" r="3.9" class="pt"/>
<circle cx="1502.21" cy="441.25" r="3.9" class="pt"/>
<circle cx="1506.65" cy="509.50" r="3.9" class="pt"/>
<circle cx="1511.09" cy="529.50" r="3.9" class="pt"/>
<circle cx="1515.52" cy="502.50" r="3.9" class="pt"/>
<circle cx="1519.96" cy="440.00" r="3.9" class="pt"/>
<circle cx="1524.39" cy="485.50" r="3.9" class="pt"/>
<circle cx="1528.83" cy="495.00" r="3.9" class="pt"/>
<circle cx="1533.26" cy="544.50" r="3.9" class="pt"/>
<circle cx="1537.70" cy="529.25" r="3.9" class="pt"/>
<circle cx="1542.13" cy="478.00" r="3.9" class="pt"/>
<circle cx="1546.57" cy="477.50" r="3.9" class="pt"/>
<circle cx="1551.00" cy="500.50" r="3.9" class="pt"/>
<circle cx="1555.44" cy="512.00" r="3.9" class="pt"/>
<circle cx="1559.87" cy="506.25" r="3.9" class="pt"/>
<circle cx="1564.31" cy="500.75" r="3.9" class="pt"/>
<circle cx="1568.74" cy="573.25" r="3.9" class="pt"/>
<circle cx="1573.18" cy="564.50" r="3.9" class="pt"/>
<circle cx="1577.61" cy="567.00" r="3.9" class="pt"/>
<circle cx="1582.05" cy="541.75" r="3.9" class="pt"/>
<circle cx="1586.48" cy="508.00" r="3.9" class="pt"/>
<circle cx="1590.92" cy="520.00" r="3.9" class="pt"/>
<circle cx="1595.35" cy="523.75" r="3.9" class="pt"/>
<circle cx="1599.79" cy="524.50" r="3.9" class="pt"/>
<circle cx="1604.23" cy="522.00" r="3.9" class="pt"/>
<circle cx="1608.66" cy="499.00" r="3.9" class="pt"/>
<circle cx="1613.10" cy="530.00" r="3.9" class="pt"/>
<circle cx="1617.53" cy="555.75" r="3.9" class="pt"/>
<circle cx="1621.97" cy="532.50" r="3.9" class="pt"/>
<circle cx="1626.40" cy="505.50" r="3.9" class="pt"/>
<circle cx="1630.84" cy="540.00" r="3.9" class="pt"/>
<circle cx="1635.27" cy="545.00" r="3.9" class="pt"/>
<circle cx="1639.71" cy="479.00" r="3.9" class="pt"/>
<circle cx="1644.14" cy="525.00" r="3.9" class="pt"/>
<circle cx="1648.58" cy="517.50" r="3.9" class="pt"/>
<circle cx="1653.01" cy="487.00" r="3.9" class="pt"/>
<circle cx="1657.45" cy="527.00" r="3.9" class="pt"/>
<circle cx="1661.88" cy="506.00" r="3.9" class="pt"/>
<circle cx="1666.32" cy="483.75" r="3.9" class="pt"/>
<circle cx="1670.75" cy="469.00" r="3.9" class="pt"/>
<circle cx="1675.19" cy="510.00" r="3.9" class="pt"/>
<circle cx="1679.62" cy="475.50" r="3.9" class="pt"/>
<circle cx="1684.06" cy="491.00" r="3.9" class="pt"/>
<circle cx="1688.50" cy="472.00" r="3.9" class="pt"/>
<circle cx="1692.93" cy="458.00" r="3.9" class="pt"/>
<circle cx="1697.37" cy="510.50" r="3.9" class="pt"/>
<circle cx="1701.80" cy="498.00" r="3.9" class="pt"/>
<circle cx="1706.24" cy="506.00" r="3.9" class="pt"/>
<circle cx="1710.67" cy="490.50" r="3.9" class="pt"/>
<circle cx="1715.11" cy="525.00" r="3.9" class="pt"/>
<circle cx="1719.54" cy="493.75" r="3.9" class="pt"/>
<circle cx="1723.98" cy="523.00" r="3.9" class="pt"/>
<circle cx="1728.41" cy="538.00" r="3.9" class="pt"/>
<circle cx="1732.85" cy="547.00" r="3.9" class="pt"/>
<circle cx="1737.28" cy="508.75" r="3.9" class="pt"/>
<circle cx="1741.72" cy="552.00" r="3.9" class="pt"/>
<circle cx="1746.15" cy="532.50" r="3.9" class="pt"/>
<circle cx="1750.59" cy="540.00" r="3.9" class="pt"/>
<circle cx="1755.02" cy="477.50" r="3.9" class="pt"/>
<circle cx="1759.46" cy="508.75" r="3.9" class="pt"/>
<circle cx="1763.89" cy="521.00" r="3.9" class="pt"/>
<circle cx="1768.33" cy="519.00" r="3.9" class="pt"/>
<circle cx="1772.76" cy="546.75" r="3.9" class="pt"/>
<circle cx="1777.20" cy="612.00" r="3.9" class="pt"/>
</svg>
<div id="card" class="abs"></div>
<div class="abs mi" style="top:809px;color:#77b52a;font-weight:bold;font-size:18px">Trafic pe site</div>
<div class="abs mi" style="top:836px;color:#c62026">Vizitatori unici</div>
<div class="abs mi" style="top:864px">Vizite</div>
<div class="abs mi" style="top:892px">Afisari</div>
<div id="tbl" class="abs">
<div class="th"><span class="c1">Data</span><svg style="position:absolute;left:63.3px;top:23.3px" width="12" height="12" viewBox="0 0 12 12"><path d="M0 0H11.6L5.8 12Z" fill="#fff"/></svg><span class="c2">Numar vizitatori</span><span class="c3">Evolutie</span></div>
<div class="tr r0"><span class="c1">Ianuarie 2025</span><span class="c2">43,199</span><span class="c3">-98.86</span></div>
<div class="tr r1"><span class="c1">Decembrie 2024</span><span class="c2">3,805,184</span><span class="c3">11.05</span></div>
<div class="tr r0"><span class="c1">Noiembrie 2024</span><span class="c2">3,426,560</span><span class="c3">3.65</span></div>
<div class="tr r1"><span class="c1">Octombrie 2024</span><span class="c2">3,305,930</span><span class="c3">-7.71</span></div>
<div class="tr r0"><span class="c1">Septembrie 2024</span><span class="c2">3,582,006</span><span class="c3">-11.17</span></div>
<div class="tr r1"><span class="c1">August 2024</span><span class="c2">4,032,491</span><span class="c3">-7.35</span></div>
<div class="tr r0"><span class="c1">Iulie 2024</span><span class="c2">4,352,216</span><span class="c3">-5.63</span></div>
<div class="tr r1"><span class="c1">Iunie 2024</span><span class="c2">4,612,034</span><span class="c3">18.38</span></div>
<div class="tr r0"><span class="c1">Mai 2024</span><span class="c2">3,895,976</span><span class="c3">5.69</span></div>
<div class="tr r1"><span class="c1">Aprilie 2024</span><span class="c2">3,686,186</span><span class="c3">-15.32</span></div>
<div class="tr r0"><span class="c1">Martie 2024</span><span class="c2">4,353,084</span><span class="c3">1.12</span></div>
<div class="tr r1"><span class="c1">Februarie 2024</span><span class="c2">4,304,662</span><span class="c3">43.87</span></div>
<div class="tr r0"><span class="c1">Ianuarie 2024</span><span class="c2">2,991,970</span><span class="c3">6,826.02</span></div>
</div>
</body></html>
